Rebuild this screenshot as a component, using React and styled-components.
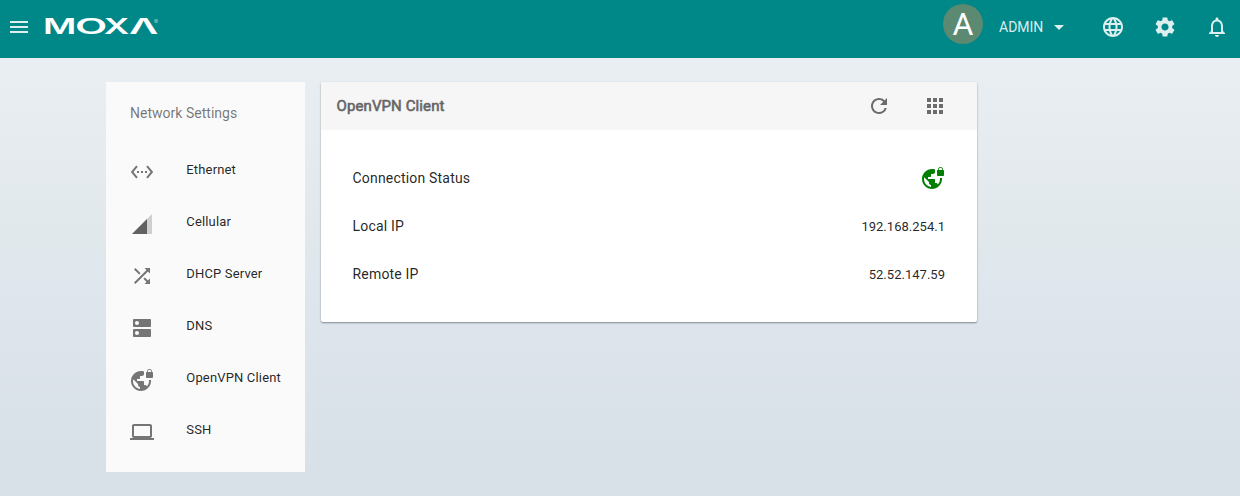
import React from 'react';
import styled, { createGlobalStyle } from 'styled-components';
import {
  MdMenu, MdArrowDropDown, MdLanguage, MdSettings, MdNotificationsNone,
  MdSettingsEthernet, MdShuffle, MdDns, MdVpnLock,
  MdLaptop, MdRefresh, MdApps,
} from 'react-icons/md';

const GlobalStyle = createGlobalStyle`
  * { box-sizing: border-box; }
  body {
    margin: 0;
    font-family: Roboto, "Liberation Sans", sans-serif;
    color: rgba(0, 0, 0, 0.87);
  }
`;

const Page = styled.div`
  min-height: 496px;
  background: linear-gradient(to bottom, #e9eef2 58px, #e1e8ec 240px, #dee5ed 300px, #d8e0e7 496px);
`;

const TopBar = styled.header`
  display: flex;
  align-items: center;
  height: 58px;
  padding: 0 11px 4px 7px;
  background: #008787;
  color: rgba(255, 255, 255, 0.87);
`;

const IconSlot = styled.span`
  display: flex;
  width: 24px;
  height: 24px;
  flex: none;
  margin-left: ${(p) => p.$left || 0}px;
`;

const Logo = styled.svg`
  display: block;
  width: 116px;
  height: 24px;
  margin-left: 14px;
  overflow: visible;
  fill: #fff;
  font-family: Inter, sans-serif;
  font-weight: 600;
`;

const Spacer = styled.div`
  flex: 1;
`;

const Avatar = styled.div`
  width: 40px;
  height: 40px;
  margin: -6px 16px 0 0;
  border-radius: 50%;
  background: #5b8972;
  color: #fff;
  font-size: 32px;
  line-height: 41px;
  text-align: center;
`;

const UserName = styled.span`
  width: 48px;
  margin-top: -1px;
  font-size: 14px;
  line-height: 20px;
  white-space: nowrap;
`;

const Content = styled.main`
  display: flex;
  align-items: flex-start;
  gap: 16px;
  padding: 24px 0 0 106px;
`;

const Sidebar = styled.nav`
  width: 199px;
  height: 390px;
  padding-top: 19px;
  background: #fafafa;
`;

const SidebarTitle = styled.h2`
  margin: 0 0 31px;
  padding-left: 24px;
  font-size: 14px;
  font-weight: 400;
  line-height: 24px;
  letter-spacing: 0.02px;
  color: rgba(0, 0, 0, 0.54);
`;

const NavItem = styled.a`
  display: flex;
  height: 52px;
  padding-left: 24px;
  font-size: 13px;
  line-height: 27px;
  letter-spacing: 0.16px;
`;

const NavIcon = styled.span`
  display: flex;
  width: 56.3px;
  padding-top: 4px;
  color: #757575;
`;

const Card = styled.section`
  width: 656px;
  height: 240px;
  border-radius: 2px;
  overflow: hidden;
  background: #fff;
  box-shadow: 0 1px 2px rgba(0, 0, 0, 0.42);
`;

const CardHeader = styled.div`
  display: flex;
  align-items: center;
  height: 48px;
  padding: 0 30px 0 15.5px;
  background: #f6f6f6;
  color: #6c6c6c;
`;

const CardTitle = styled.h1`
  flex: 1;
  margin: 0;
  font-size: 15px;
  font-weight: 400;
  letter-spacing: 0.1px;
  color: #666;
  -webkit-text-stroke: 0.6px #666;
`;

const Rows = styled.dl`
  margin: 0;
  padding: 24px 32px 0 31.5px;
`;

const Row = styled.div`
  display: flex;
  align-items: center;
  justify-content: space-between;
  height: 48px;
`;

const Label = styled.dt`
  font-size: 14px;
  letter-spacing: 0.19px;
`;

const Value = styled.dd`
  display: flex;
  margin: 0;
  font-size: 13px;
  letter-spacing: 0.02px;
`;

const StatusIcon = styled(MdVpnLock)`
  color: #008000;
`;

// Signal wedge: the filled part is the strength, the pale strip the remainder.
function CellularIcon({ size }) {
  return (
    <svg width={size} height={size} viewBox="0 0 24 24">
      <path d="M2 22h20V2z" fill="#cfcfcf" />
      <path d="M17 7L2 22h15z" fill="#616161" />
    </svg>
  );
}

const navItems = [
  ['Ethernet', MdSettingsEthernet],
  ['Cellular', CellularIcon],
  ['DHCP Server', MdShuffle],
  ['DNS', MdDns],
  ['OpenVPN Client', MdVpnLock],
  ['SSH', MdLaptop],
];

// Each wordmark letter: glyph, x offset, horizontal stretch.
const logoLetters = [
  ['M', -2.1, 1.72],
  ['O', 30.1, 2],
  ['X', 58.7, 1.69],
  ['Λ', 84, 1.92],
];

export default function App() {
  return (
    <>
      <GlobalStyle />
      <Page>
        <TopBar>
          <IconSlot><MdMenu size={24} /></IconSlot>
          <Logo viewBox="0 0 116 24" aria-label="MOXA">
            {logoLetters.map(([letter, x, stretch]) => (
              <text key={letter} fontSize="21" transform={`translate(${x} 19) scale(${stretch} 1)`}>
                {letter}
              </text>
            ))}
            <text x="109" y="9" fontSize="6" fontWeight="400" opacity="0.6">®</text>
          </Logo>
          <Spacer />
          <Avatar>A</Avatar>
          <UserName>ADMIN</UserName>
          <IconSlot><MdArrowDropDown size={24} /></IconSlot>
          <IconSlot $left={30}><MdLanguage size={24} /></IconSlot>
          <IconSlot $left={28}><MdSettings size={24} /></IconSlot>
          <IconSlot $left={28}><MdNotificationsNone size={24} /></IconSlot>
        </TopBar>
        <Content>
          <Sidebar>
            <SidebarTitle>Network Settings</SidebarTitle>
            {navItems.map(([name, Icon]) => (
              <NavItem key={name}>
                <NavIcon><Icon size={24} /></NavIcon>
                {name}
              </NavItem>
            ))}
          </Sidebar>
          <Card>
            <CardHeader>
              <CardTitle>OpenVPN Client</CardTitle>
              <IconSlot><MdRefresh size={24} /></IconSlot>
              <IconSlot $left={32}><MdApps size={24} /></IconSlot>
            </CardHeader>
            <Rows>
              <Row><Label>Connection Status</Label><Value><StatusIcon size={24} /></Value></Row>
              <Row><Label>Local IP</Label><Value>192.168.254.1</Value></Row>
              <Row><Label>Remote IP</Label><Value>52.52.147.59</Value></Row>
            </Rows>
          </Card>
        </Content>
      </Page>
    </>
  );
}
